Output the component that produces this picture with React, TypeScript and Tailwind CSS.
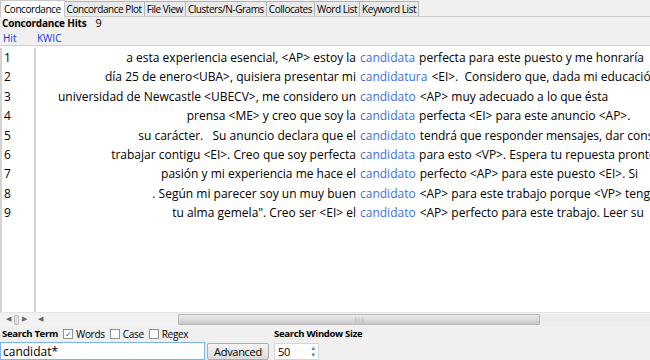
import { useState } from 'react'

const tabs = ['Concordance', 'Concordance Plot', 'File View', 'Clusters/N-Grams', 'Collocates', 'Word List', 'Keyword List']

const hits = [
  ['a esta experiencia esencial, <AP> estoy la', 'candidata', 'perfecta para este puesto y me honraría'],
  ['día 25 de enero<UBA>, quisiera presentar mi', 'candidatura', '<EI>.  Considero que, dada mi educación'],
  ['universidad de Newcastle <UBECV>, me considero un', 'candidato', '<AP> muy adecuado a lo que ésta'],
  ['prensa <ME> y creo que soy la', 'candidata', 'perfecta <EI> para este anuncio <AP>.'],
  ['su carácter.   Su anuncio declara que el', 'candidato', 'tendrá que responder mensajes, dar consejos'],
  ['trabajar contigu <EI>. Creo que soy perfecta', 'candidata', 'para esto <VP>. Espera tu repuesta pronto'],
  ['pasión y mi experiencia me hace el', 'candidato', 'perfecto <AP> para este puesto <EI>. Si'],
  ['. Según mi parecer soy un muy buen', 'candidato', '<AP> para este trabajo porque <VP> tengo'],
  ['tu alma gemela". Creo ser <EI> el', 'candidato', '<AP> perfecto para este trabajo. Leer su'],
]

function Check({ on, label }: { on?: boolean; label: string }) {
  return (
    <span className="flex items-center gap-[3px]">
      <span className="flex h-[10px] w-[10px] items-center justify-center border border-[#8f8f8f] bg-white text-[8px] leading-none text-[#2b4a8a]">
        {on ? '✓' : ''}
      </span>
      <span>{label}</span>
    </span>
  )
}

export default function App() {
  const [term, setTerm] = useState('candidat*')

  return (
    <div className="flex h-[360px] w-[650px] flex-col overflow-hidden bg-[#f0f0f0] font-['Open_Sans',sans-serif] text-black">
      {/* tabs */}
      <div className="flex h-[17px] shrink-0 items-end border-b border-[#c8c8c8] bg-[#f0f0f0] text-[10px] leading-none tracking-[-0.45px]">
        {tabs.map((t, i) => (
          <div
            key={t}
            className={
              i === 0
                ? 'relative -mb-px flex h-[17px] items-center border border-b-0 border-[#c8c8c8] bg-white px-[3px]'
                : 'flex h-[15px] items-center border border-b-0 border-l-0 border-[#b4b4b4] bg-[#e9e9e9] px-[2px]'
            }
          >
            {t}
          </div>
        ))}
      </div>

      <div className="flex h-[12px] shrink-0 items-center gap-[9px] pl-[2px] text-[10px] leading-[12px] tracking-[-0.2px]">
        <span className="font-bold">Concordance Hits</span>
        <span className="text-[11px]">9</span>
      </div>
      <div className="flex h-[16px] shrink-0 items-end pb-[1px] text-[10px] leading-[12px] text-[#2236d8]">
        <span className="w-[37px] pl-[3px]">Hit</span>
        <span>KWIC</span>
      </div>

      {/* table */}
      <div className="flex min-h-0 flex-1 border-t border-[#cfcfcf] bg-white pt-[2px] text-[12px] leading-[19.4px]">
        <div className="w-[36px] border-l-2 border-r-2 border-[#d4d4d4] pl-[2px]">
          {hits.map((_, i) => (
            <div key={i}>{i + 1}</div>
          ))}
        </div>
        <div className="flex-1 overflow-hidden">
          {hits.map(([l, k, r], i) => (
            <div key={i} className="flex whitespace-pre">
              <div className="flex w-[320px] shrink-0 justify-end overflow-hidden">
                <span>{l}</span>
              </div>
              <span className="ml-[4px] text-[#3d6fdb]">{k}</span>
              <span className="ml-[4px]">{r}</span>
            </div>
          ))}
        </div>
      </div>

      {/* scrollbars */}
      <div className="flex h-[14px] shrink-0 items-center border-t border-[#e2e2e2] bg-[#f2f2f2] text-[7px] text-[#666]">
        <div className="flex w-[38px] items-center gap-[3px] pl-[6px]">
          <span>◀</span>
          <span className="h-[10px] w-[5px] rounded-[1px] border border-[#bdbdbd] bg-[#dedede]" />
          <span>▶</span>
        </div>
        <span className="w-[10px]">◀</span>
        <div className="flex h-[12px] flex-1 items-center">
          <div className="h-full w-[130px]" />
          <div className="flex h-[11px] w-[362px] items-center justify-center rounded-[1px] border border-[#b8b8b8] bg-gradient-to-b from-[#ececec] to-[#c9c9c9] text-[6px] text-[#999]">
            |||
          </div>
          <div className="h-full flex-1 bg-[#ececec]" />
        </div>
      </div>

      {/* search */}
      <div className="flex h-[34px] shrink-0 gap-[2px] text-[10px] leading-none tracking-[-0.3px]">
        <div className="flex flex-col justify-between pt-[3px]">
          <div className="flex items-center gap-[5px] pl-[2px]">
            <span className="text-[9.5px] font-bold">Search Term</span>
            <Check on label="Words" />
            <Check label="Case" />
            <Check label="Regex" />
          </div>
          <input
            value={term}
            onChange={e => setTerm(e.target.value)}
            className="h-[18px] w-[205px] border border-[#7eb4ea] bg-white px-[2px] text-[12px] tracking-normal outline-none"
          />
        </div>
        <div className="flex flex-col justify-end">
          <button className="h-[17px] w-[62px] rounded-[2px] border border-[#adadad] bg-gradient-to-b from-[#f4f4f4] to-[#dcdcdc] text-[11px]">
            Advanced
          </button>
        </div>
        <div className="ml-[3px] flex flex-col justify-between pt-[3px]">
          <span className="text-[9.5px] font-bold">Search Window Size</span>
          <div className="flex h-[17px] w-[45px] items-center justify-between border border-[#d6d6d6] bg-white pl-[3px] pr-[2px] text-[11px]">
            <span>50</span>
            <div className="flex flex-col text-[6px] leading-[7px] text-[#4a7fc8]">
              <span>▲</span>
              <span>▼</span>
            </div>
          </div>
        </div>
      </div>
    </div>
  )
}
